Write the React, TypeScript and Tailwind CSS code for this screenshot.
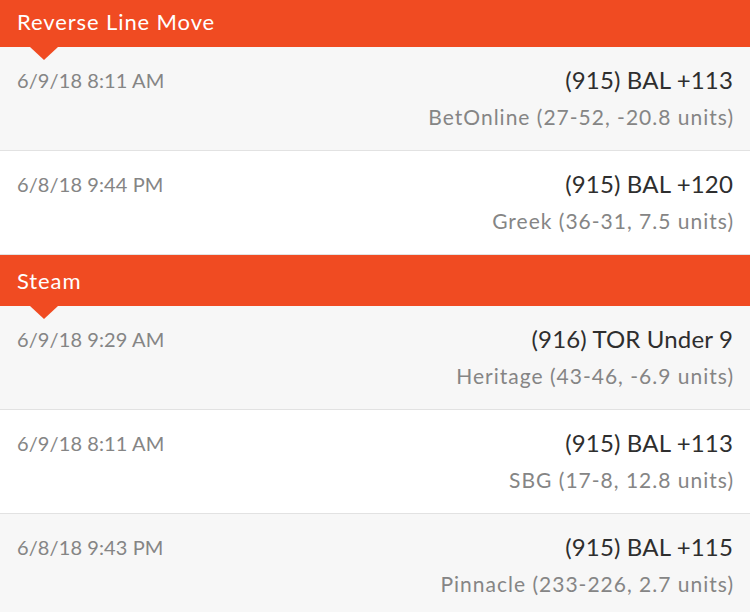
import React from "react";

interface Pick {
  time: string;
  line: string;
  source: string;
}

const sections: { title: string; picks: Pick[] }[] = [
  {
    title: "Reverse Line Move",
    picks: [
      { time: "6/9/18 8:11 AM", line: "(915) BAL +113", source: "BetOnline (27-52, -20.8 units)" },
      { time: "6/8/18 9:44 PM", line: "(915) BAL +120", source: "Greek (36-31, 7.5 units)" },
    ],
  },
  {
    title: "Steam",
    picks: [
      { time: "6/9/18 9:29 AM", line: "(916) TOR Under 9", source: "Heritage (43-46, -6.9 units)" },
      { time: "6/9/18 8:11 AM", line: "(915) BAL +113", source: "SBG (17-8, 12.8 units)" },
      { time: "6/8/18 9:43 PM", line: "(915) BAL +115", source: "Pinnacle (233-226, 2.7 units)" },
    ],
  },
];

const SectionHeader: React.FC<{ title: string; first?: boolean }> = ({ title, first }) => (
  <div className={`relative h-[51px] bg-[#f04b22] px-[17px] flex items-center ${first ? "-mt-[4px]" : ""}`}>
    <span className="text-[22px] text-white leading-none tracking-[0.9px]">{title}</span>
    <div className="absolute left-[30px] top-full w-0 h-0 border-l-[14px] border-r-[14px] border-t-[13px] border-l-transparent border-r-transparent border-t-[#f04b22] z-10" />
  </div>
);

const PickRow: React.FC<{ pick: Pick; shaded: boolean }> = ({ pick, shaded }) => (
  <div
    className={`h-[104px] border-b border-[#e2e2e2] px-[17px] pt-[18px] flex justify-between ${
      shaded ? "bg-[#f7f7f7]" : "bg-white"
    }`}
  >
    <div className="text-[20px] text-[#858585] leading-[28px] pt-[1px] tracking-[0.1px]">{pick.time}</div>
    <div className="flex flex-col items-end">
      <div className="text-[24px] text-[#2e2e2e] leading-[30px] tracking-[0.15px]">{pick.line}</div>
      <div className="text-[21px] text-[#858585] leading-[28px] mt-[8px] tracking-[1px] -mr-[1px]">{pick.source}</div>
    </div>
  </div>
);

export default function App() {
  return (
    <div className="w-[750px] h-[612px] overflow-hidden bg-white" style={{ fontFamily: "Lato, 'Open Sans', sans-serif" }}>
      {sections.map((s, si) => (
        <div key={s.title}>
          <SectionHeader title={s.title} first={si === 0} />
          {s.picks.map((p, i) => (
            <PickRow key={i} pick={p} shaded={i % 2 === 0} />
          ))}
        </div>
      ))}
    </div>
  );
}
